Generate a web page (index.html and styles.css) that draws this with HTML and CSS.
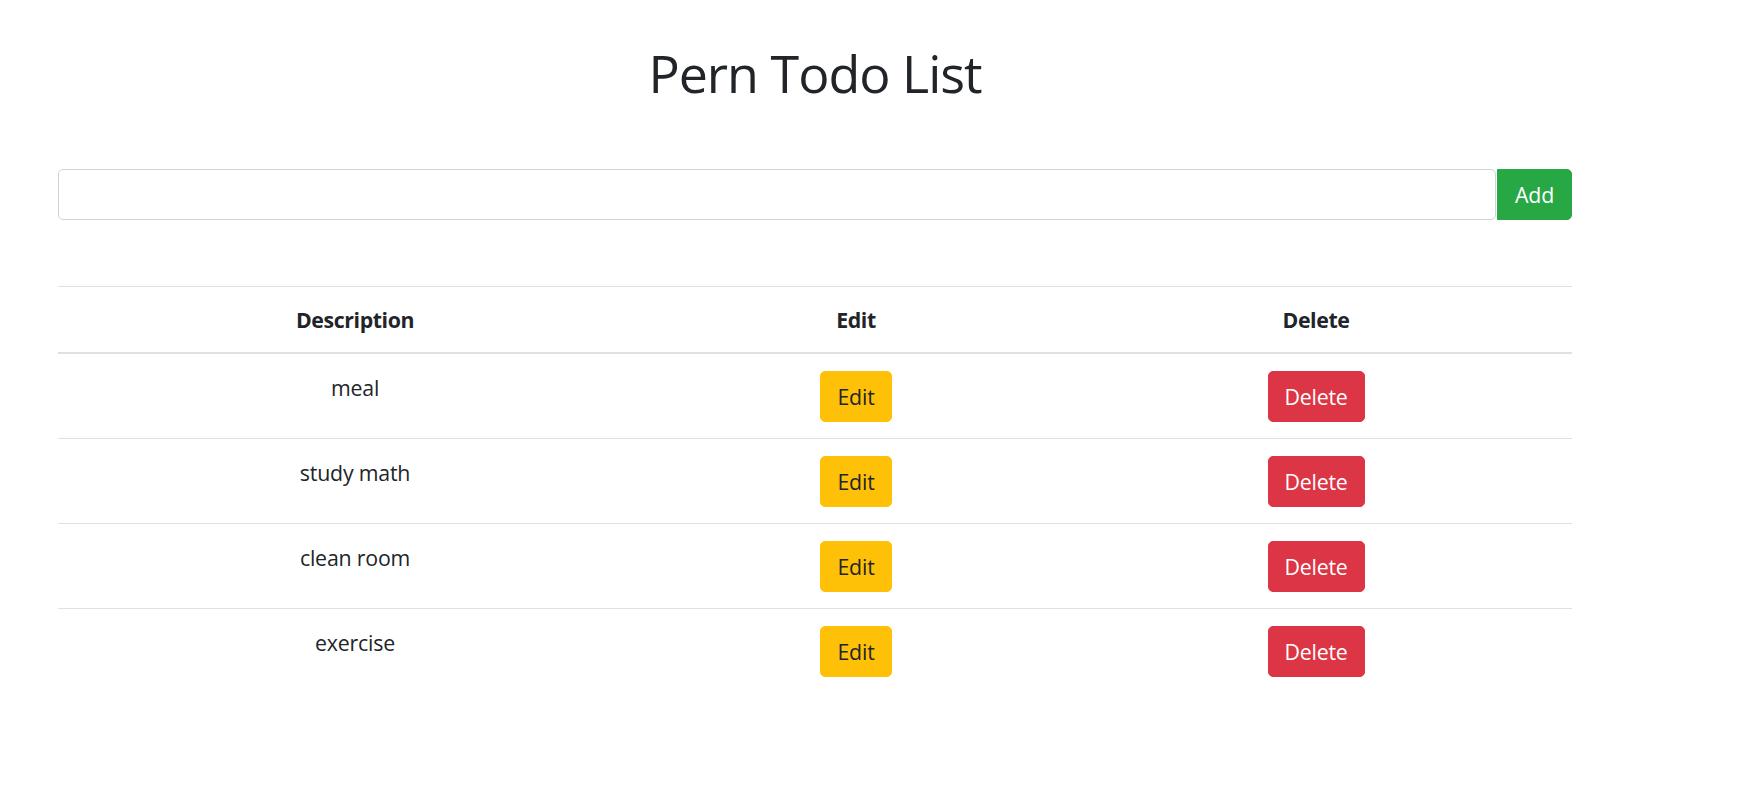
FILE: index.html
```html
<!DOCTYPE html>
<html lang="en">
<head>
<meta charset="utf-8">
<title>Pern Todo List</title>
<link rel="stylesheet" href="styles.css">
</head>
<body>
<div class="container">
  <h1 class="title">Pern Todo List</h1>
  <form class="add-form">
    <input class="add-input" type="text" value="">
    <button class="btn btn-add" type="button">Add</button>
  </form>
  <table class="todo-table">
    <colgroup>
      <col class="col-desc">
      <col class="col-edit">
      <col class="col-delete">
    </colgroup>
    <thead>
      <tr><th>Description</th><th>Edit</th><th>Delete</th></tr>
    </thead>
    <tbody>
      <tr><td class="desc-cell">meal</td><td><button class="btn btn-edit" type="button">Edit</button></td><td><button class="btn btn-delete" type="button">Delete</button></td></tr>
      <tr><td class="desc-cell">study math</td><td><button class="btn btn-edit" type="button">Edit</button></td><td><button class="btn btn-delete" type="button">Delete</button></td></tr>
      <tr><td class="desc-cell">clean room</td><td><button class="btn btn-edit" type="button">Edit</button></td><td><button class="btn btn-delete" type="button">Delete</button></td></tr>
      <tr><td class="desc-cell">exercise</td><td><button class="btn btn-edit" type="button">Edit</button></td><td><button class="btn btn-delete" type="button">Delete</button></td></tr>
    </tbody>
  </table>
</div>
</body>
</html>
```
FILE: styles.css
```css
body {
  margin: 0;
  background: #fff;
  color: #212529;
  font-family: "Open Sans", "Noto Sans", sans-serif;
  font-size: 21.33px;
  line-height: 32px;
}

.container {
  width: 1514px;
  margin-left: 58px;
  padding-top: 41px;
}

.title {
  margin: 0;
  font-size: 52px;
  font-weight: 400;
  letter-spacing: -1px;
  line-height: 64px;
  text-align: center;
}

.add-form {
  display: flex;
  margin-top: 64px;
}

.add-input {
  flex: 1;
  height: 51px;
  box-sizing: border-box;
  border: 1px solid #ced4da;
  border-radius: 5px;
  padding: 0 16px;
  font: inherit;
  color: #495057;
  background: #fff;
  outline: none;
}

.btn {
  display: inline-block;
  box-sizing: border-box;
  height: 51px;
  padding: 0;
  border: 1px solid transparent;
  border-radius: 5px;
  font-family: inherit;
  font-size: 21.33px;
  letter-spacing: -0.2px;
  line-height: 49px;
  text-align: center;
  cursor: pointer;
}

.btn-add {
  width: 75px;
  margin-left: 1px;
  background: #28a745;
  border-color: #28a745;
  color: #fff;
  border-radius: 0 5px 5px 0;
}

.btn-edit {
  width: 72px;
  background: #ffc107;
  border-color: #ffc107;
  color: #212529;
}

.btn-delete {
  width: 97px;
  background: #dc3545;
  border-color: #dc3545;
  color: #fff;
}

.todo-table {
  width: 100%;
  margin-top: 66px;
  border-collapse: collapse;
  table-layout: fixed;
  text-align: center;
}

.col-desc { width: 594px; }
.col-edit { width: 408px; }
.col-delete { width: 512px; }

.todo-table th,
.todo-table td {
  padding: 17px 16px 16px;
  border-top: 1px solid #dee2e6;
  vertical-align: top;
  letter-spacing: -0.2px;
}

.todo-table .desc-cell {
  padding-top: 18px;
}

.todo-table th {
  padding-top: 17px;
  padding-bottom: 16px;
  border-bottom: 2px solid #dee2e6;
  font-weight: 700;
  letter-spacing: -0.4px;
}
```
